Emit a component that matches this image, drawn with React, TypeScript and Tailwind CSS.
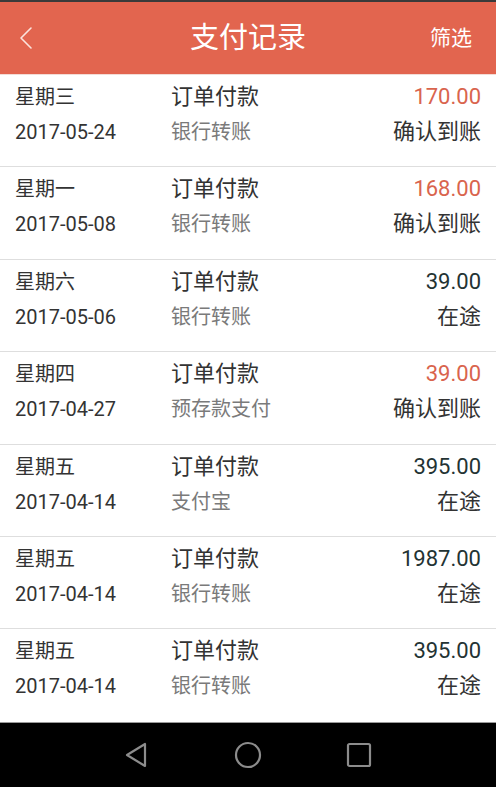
import React from "react";

type Row = { day: string; date: string; method: string; amount: string; red: boolean; status: string };

const rows: Row[] = [
  { day: "星期三", date: "2017-05-24", method: "银行转账", amount: "170.00", red: true, status: "确认到账" },
  { day: "星期一", date: "2017-05-08", method: "银行转账", amount: "168.00", red: true, status: "确认到账" },
  { day: "星期六", date: "2017-05-06", method: "银行转账", amount: "39.00", red: false, status: "在途" },
  { day: "星期四", date: "2017-04-27", method: "预存款支付", amount: "39.00", red: true, status: "确认到账" },
  { day: "星期五", date: "2017-04-14", method: "支付宝", amount: "395.00", red: false, status: "在途" },
  { day: "星期五", date: "2017-04-14", method: "银行转账", amount: "1987.00", red: false, status: "在途" },
  { day: "星期五", date: "2017-04-14", method: "银行转账", amount: "395.00", red: false, status: "在途" },
];

export default function App() {
  return (
    <div
      className="w-[496px] h-[787px] flex flex-col bg-white overflow-hidden"
      style={{ fontFamily: 'Roboto, "Noto Sans CJK SC", sans-serif' }}
    >
      <div className="h-[2px] bg-[#3a3a3a]" />
      <div className="h-[72px] bg-[#e2654f] flex items-center relative shrink-0">
        <div className="w-[60px] pl-[18px] flex items-center">
          <svg width="16" height="24" viewBox="0 0 16 24" fill="none">
            <path d="M13 2 L3 12 L13 22" stroke="#fbe3dd" strokeWidth="1.6" strokeLinecap="round" strokeLinejoin="round" />
          </svg>
        </div>
        <div className="flex-1 text-center text-white text-[29px] leading-none font-normal">支付记录</div>
        <div className="w-[60px] pr-[24px] text-right text-white text-[21px] leading-none whitespace-nowrap flex justify-end">
          筛选
        </div>
      </div>
      <div className="h-[1px] bg-[#f3dcd6]" />
      <div className="flex flex-col flex-1">
        {rows.map((r, i) => (
          <div
            key={i}
            className={
              "h-[92.4px] shrink-0 flex px-[15px] pt-[8px] " +
              (i < rows.length - 1 ? "border-b border-[#dedede]" : "")
            }
          >
            <div className="w-[156px] flex flex-col">
              <div className="h-[28px] leading-[28px] text-[20px] text-[#333]">{r.day}</div>
              <div className="h-[28px] leading-[28px] text-[20px] text-[#333] mt-[7px]">{r.date}</div>
            </div>
            <div className="flex-1 flex flex-col">
              <div className="h-[28px] leading-[28px] text-[22px] text-[#333]">订单付款</div>
              <div className="h-[28px] leading-[28px] text-[20px] text-[#7a7a7a] mt-[7px]">{r.method}</div>
            </div>
            <div className="flex flex-col items-end">
              <div
                className={
                  "h-[28px] leading-[28px] text-[22px] " + (r.red ? "text-[#d9644d]" : "text-[#233333]")
                }
              >
                {r.amount}
              </div>
              <div className="h-[28px] leading-[28px] text-[22px] text-[#333] mt-[7px]">{r.status}</div>
            </div>
          </div>
        ))}
      </div>
      <div className="h-[1px] bg-[#9a9a9a]" />
      <div className="h-[64px] bg-black flex items-center justify-center gap-[84px] shrink-0">
        <svg width="26" height="28" viewBox="0 0 26 28" fill="none">
          <path d="M21 3 L21 25 L3 14 Z" stroke="#8c8c8c" strokeWidth="2.2" strokeLinejoin="round" />
        </svg>
        <svg width="28" height="28" viewBox="0 0 28 28" fill="none">
          <circle cx="14" cy="14" r="12" stroke="#8c8c8c" strokeWidth="2.2" />
        </svg>
        <svg width="26" height="26" viewBox="0 0 26 26" fill="none">
          <rect x="2" y="2" width="22" height="22" rx="1.5" stroke="#8c8c8c" strokeWidth="2.2" />
        </svg>
      </div>
    </div>
  );
}
